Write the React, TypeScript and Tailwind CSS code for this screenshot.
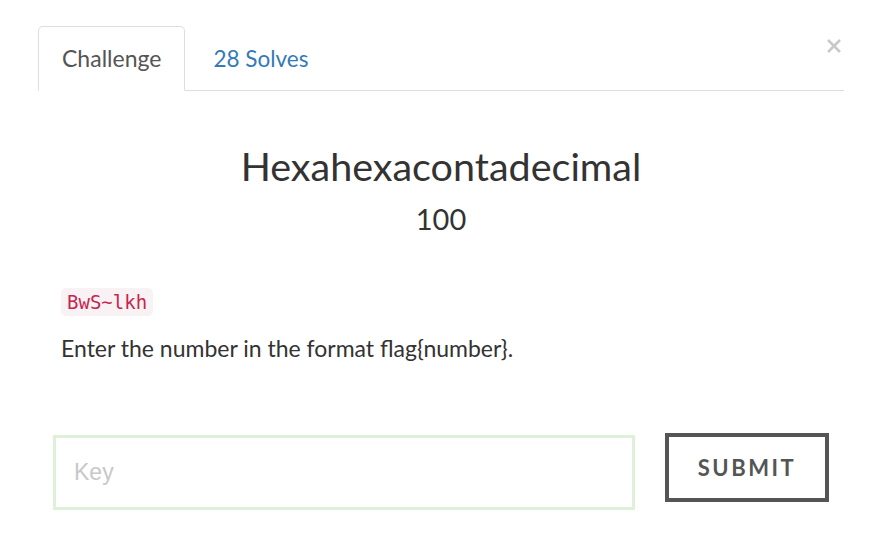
export default function App() {
  return (
    <div className="relative h-[556px] w-[878px] bg-white pl-[38px] pr-[34px] pt-[26px] font-['Lato','Noto_Sans',sans-serif] text-[#333]">
      <button
        type="button"
        aria-label="Close"
        className="absolute left-[826px] top-[38px] h-[16px] w-[16px]"
      >
        <svg viewBox="0 0 16 16" className="h-[16px] w-[16px]">
          <path d="M2 2 L14 14 M14 2 L2 14" stroke="#c9c9c9" strokeWidth="2.6" strokeLinecap="butt" />
        </svg>
      </button>

      <ul className="flex border-b border-[#ddd]">
        <li className="-mb-px">
          <span className="flex h-[65px] items-center rounded-t-[5px] border border-[#ddd] border-b-transparent bg-white px-[23px] text-[23px] text-[#555]">
            Challenge
          </span>
        </li>
        <li className="-mb-px ml-[4px]">
          <span className="flex h-[65px] items-center px-[24px] text-[22.5px] text-[#337ab7]">
            28 Solves
          </span>
        </li>
      </ul>

      <div className="flex flex-col items-center pt-[53px]">
        <h3 className="text-[39.5px] leading-[44px]">Hexahexacontadecimal</h3>
        <h4 className="mt-[14px] text-[29px] leading-[34px]">100</h4>
      </div>

      <div className="px-[23px] pt-[52px]">
        <code className="block w-fit rounded-[5px] bg-[#f9f2f4] px-[6px] py-[3px] font-['DejaVu_Sans_Mono',monospace] text-[19px] leading-[22px] text-[#c7254e]">
          BwS~lkh
        </code>
        <p className="mt-[18px] text-[23px] leading-[28px]">Enter the number in the format flag{'{'}number{'}'}.</p>
      </div>

      <div className="mt-[73px] flex items-start pl-[15px] pr-[15px]">
        <input
          placeholder="Key"
          className="h-[75px] w-[582px] border-[3px] border-[#dff0d8] px-[18px] font-['Liberation_Sans',sans-serif] text-[23px] text-[#555] outline-none placeholder:text-[#c8c8c8]"
        />
        <button
          type="button"
          className="ml-[30px] -mt-[2px] h-[69px] w-[164px] border-[4px] border-[#555] text-[22px] font-bold tracking-[2.5px] text-[#555]"
        >
          SUBMIT
        </button>
      </div>
    </div>
  )
}
